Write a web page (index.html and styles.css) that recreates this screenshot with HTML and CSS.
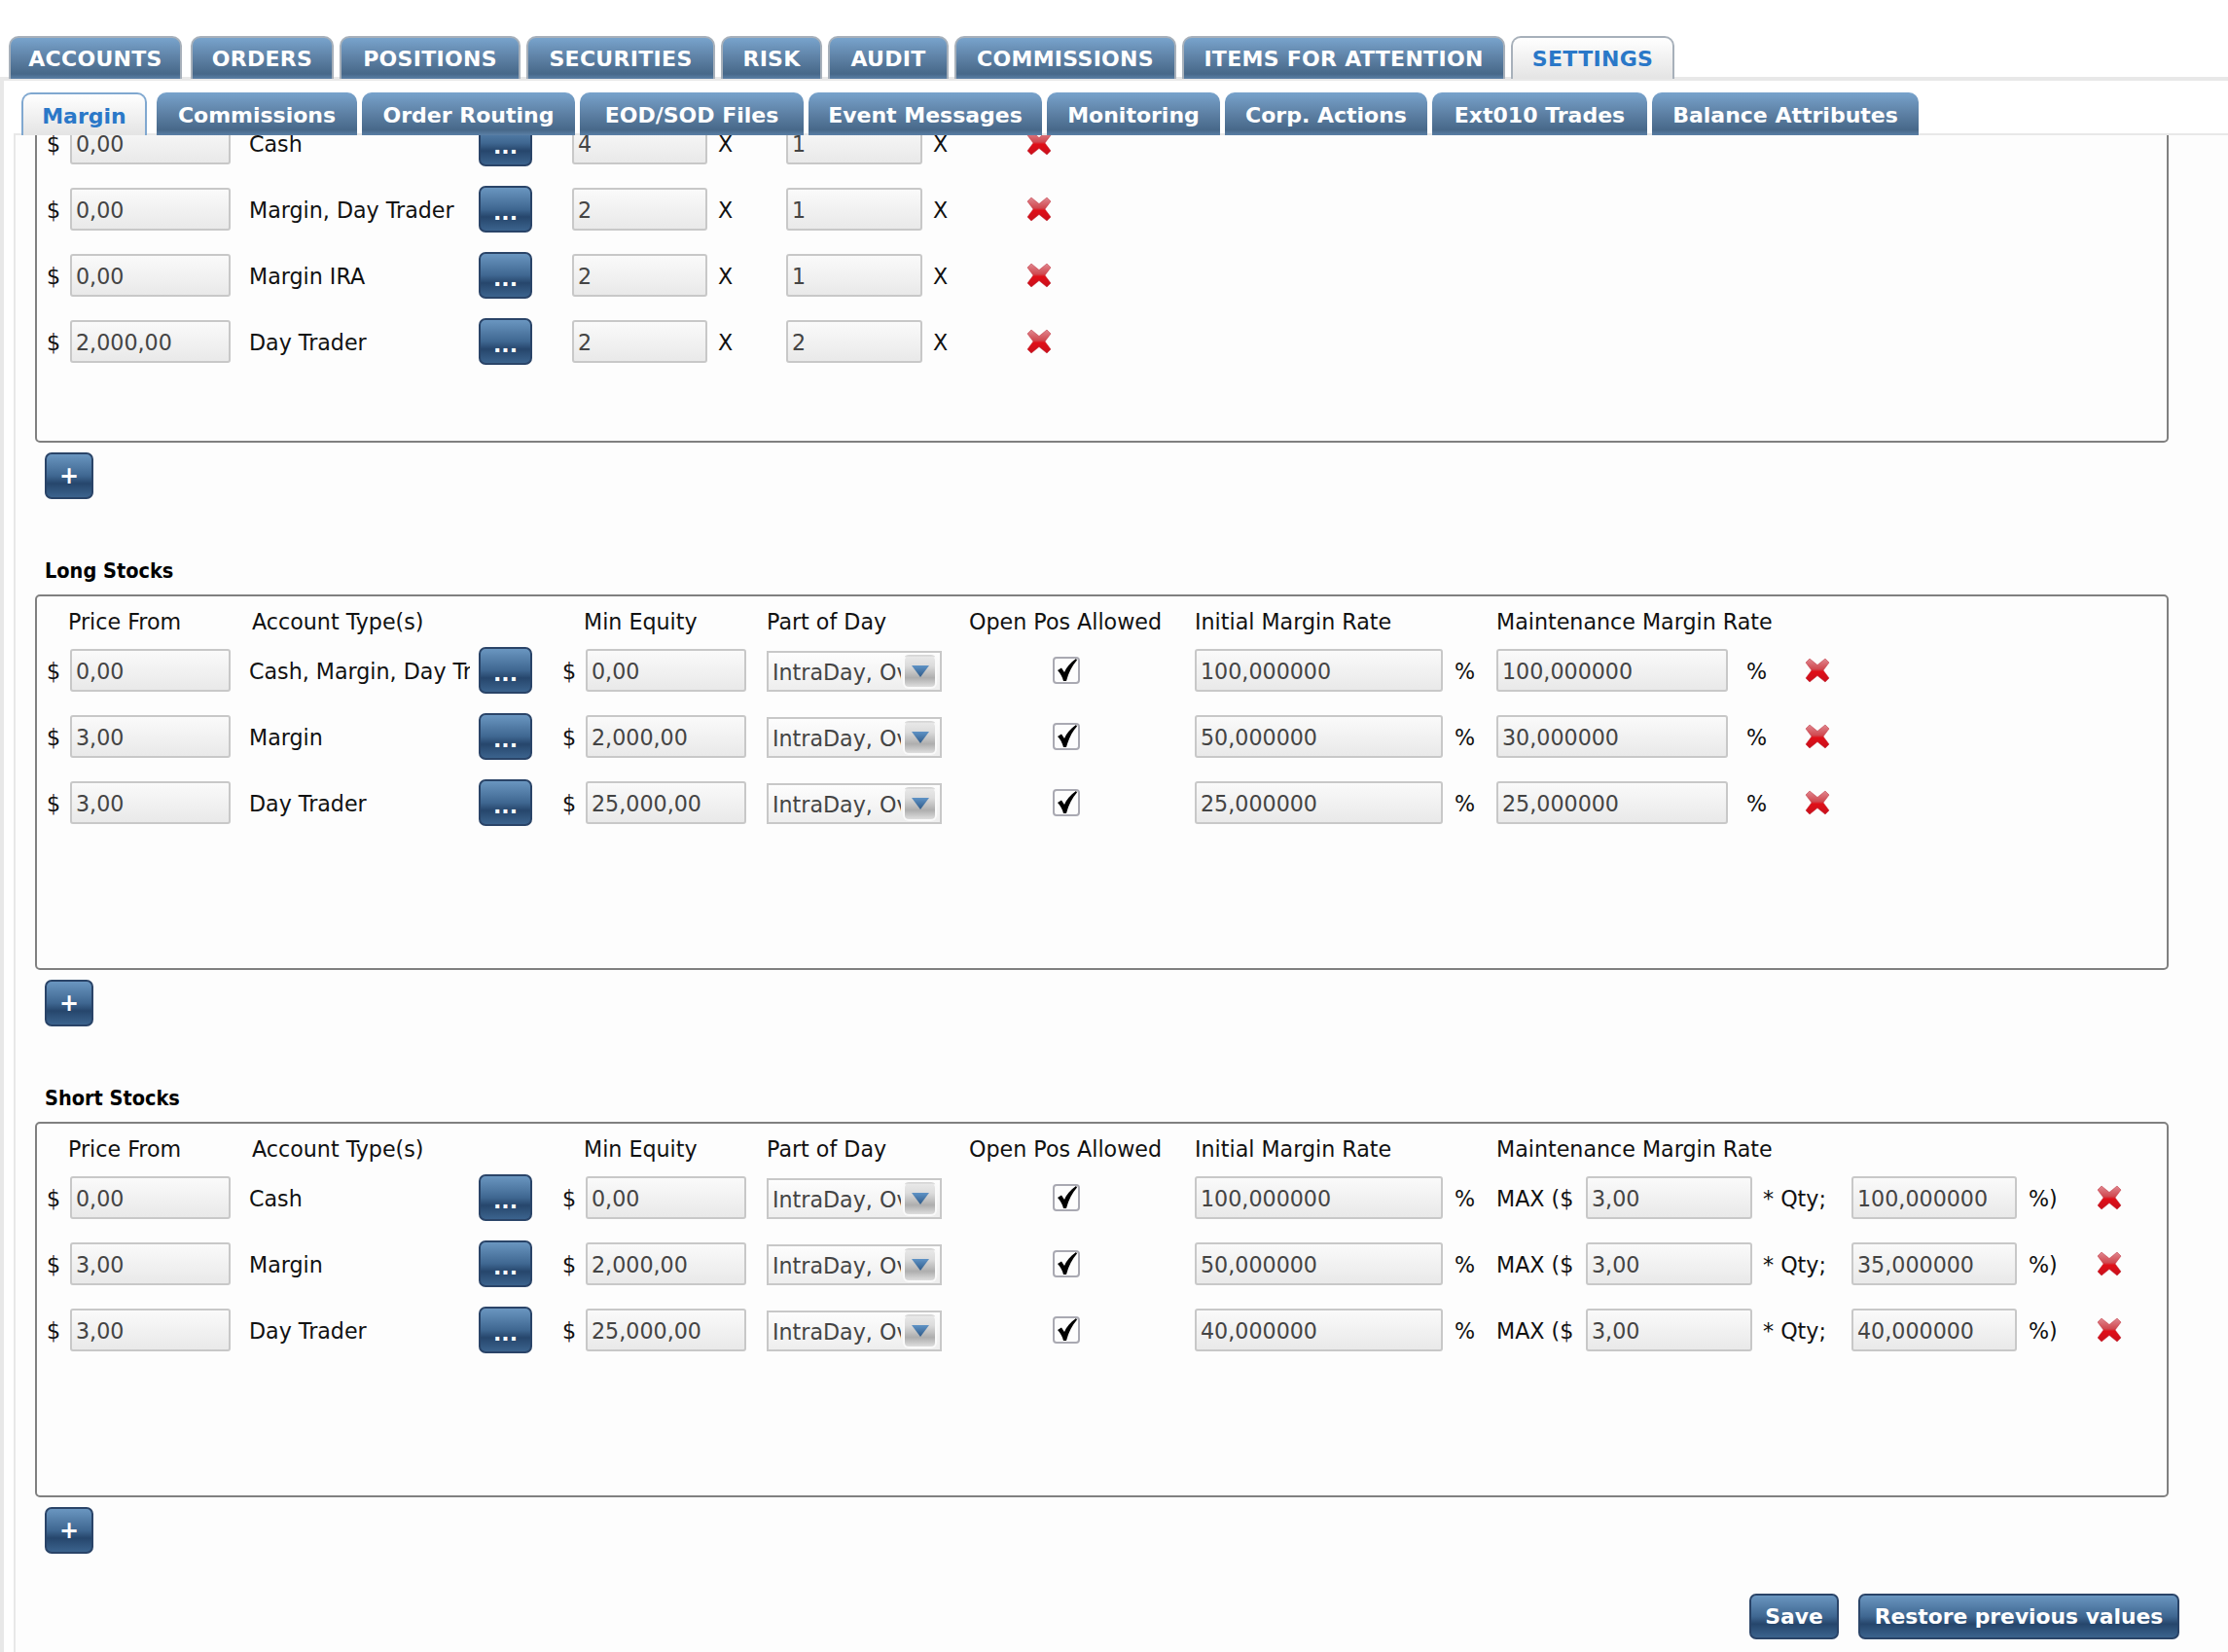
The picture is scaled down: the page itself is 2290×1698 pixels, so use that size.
FILE: index.html
```html
<!DOCTYPE html>
<html lang="en">

<head>
    <meta charset="UTF-8">
    <meta name="viewport" content="width=device-width, initial-scale=1.0">
    <title>Settings - Margin</title>
    <link rel="stylesheet" href="styles.css">
</head>

<body>
    <svg class="sprites" width="0" height="0">
        <defs>
            <linearGradient id="del-fill" x1="0" y1="0" x2="0" y2="1">
                <stop offset="0" stop-color="#e08890" />
                <stop offset="0.45" stop-color="#d0484f" />
                <stop offset="0.55" stop-color="#e00f18" />
                <stop offset="1" stop-color="#c8101c" />
            </linearGradient>
            <linearGradient id="arrow-fill" x1="0" y1="0" x2="0" y2="1">
                <stop offset="0" stop-color="#5f93c6" />
                <stop offset="1" stop-color="#2f5a88" />
            </linearGradient>
            <symbol id="del" viewBox="0 0 26 26">
                <path d="M5 1 L13 7.500 L21 1 L25 5 L19 13 L25 21 L21 25 L13 18.500 L5 25 L1 21 L7 13 L1 5 Z" fill="url(#del-fill)" stroke="#b8202c" stroke-opacity=".45" stroke-linejoin="round" />
            </symbol>
            <symbol id="tick" viewBox="0 0 28 28">
                <path d="M5 14 L9 11.500 L12 16 C14 11 18 6 24 2 L25 3.500 C20 9 16.500 16 14 25 L11 25 C10 21 8 17 5 14 Z" fill="#000" />
            </symbol>
        </defs>
    </svg>

    <nav class="tabs main">
        <a class="tab">ACCOUNTS</a>
        <a class="tab">ORDERS</a>
        <a class="tab">POSITIONS</a>
        <a class="tab">SECURITIES</a>
        <a class="tab">RISK</a>
        <a class="tab">AUDIT</a>
        <a class="tab">COMMISSIONS</a>
        <a class="tab">ITEMS FOR ATTENTION</a>
        <a class="tab active">SETTINGS</a>
    </nav>

    <div class="outer-panel">
        <nav class="tabs sub">
            <a class="tab active">Margin</a>
            <a class="tab">Commissions</a>
            <a class="tab">Order Routing</a>
            <a class="tab">EOD/SOD Files</a>
            <a class="tab">Event Messages</a>
            <a class="tab">Monitoring</a>
            <a class="tab">Corp. Actions</a>
            <a class="tab">Ext010 Trades</a>
            <a class="tab">Balance Attributes</a>
        </nav>

        <div class="sub-panel">
            <!-- first group is scrolled partly out of view -->
            <section class="group scrolled">
                <div class="box">
                    <div class="rows rows-first">
                        <div class="head-spacer"></div>

                        <span>$</span><input class="field" value="0,00"><span class="type">Cash</span><button class="btn">...</button>
                        <span></span><input class="field" value="4"><span class="pad">X</span><input class="field" value="1"><span class="pad">X</span>
                        <svg class="del"><use href="#del" /></svg>

                        <span>$</span><input class="field" value="0,00"><span class="type">Margin, Day Trader</span><button class="btn">...</button>
                        <span></span><input class="field" value="2"><span class="pad">X</span><input class="field" value="1"><span class="pad">X</span>
                        <svg class="del"><use href="#del" /></svg>

                        <span>$</span><input class="field" value="0,00"><span class="type">Margin IRA</span><button class="btn">...</button>
                        <span></span><input class="field" value="2"><span class="pad">X</span><input class="field" value="1"><span class="pad">X</span>
                        <svg class="del"><use href="#del" /></svg>

                        <span>$</span><input class="field" value="2,000,00"><span class="type">Day Trader</span><button class="btn">...</button>
                        <span></span><input class="field" value="2"><span class="pad">X</span><input class="field" value="2"><span class="pad">X</span>
                        <svg class="del"><use href="#del" /></svg>
                    </div>
                </div>
                <button class="btn add">+</button>
            </section>

            <section class="group">
                <h2 class="group-title">Long Stocks</h2>
                <div class="box">
                    <div class="rows rows-long">
                        <span class="head h-price">Price From</span>
                        <span class="head h-type">Account Type(s)</span>
                        <span class="head h-equity">Min Equity</span>
                        <span class="head h-part">Part of Day</span>
                        <span class="head h-open">Open Pos Allowed</span>
                        <span class="head h-init">Initial Margin Rate</span>
                        <span class="head h-maint">Maintenance Margin Rate</span>

                        <span>$</span><input class="field" value="0,00"><span class="type">Cash, Margin, Day Trader</span><button class="btn">...</button>
                        <span class="sym">$</span><input class="field" value="0,00">
                        <div class="select"><span class="select-text">IntraDay, Overnight</span><span class="select-arrow"><svg width="18" height="12" viewBox="0 0 18 12"><path d="M0 0H18L9 12Z" fill="url(#arrow-fill)" /></svg></span></div>
                        <span class="check"><svg width="28" height="28"><use href="#tick" /></svg></span>
                        <input class="field" value="100,000000"><span class="pct">%</span><input class="field" value="100,000000"><span class="pct wide">%</span>
                        <svg class="del"><use href="#del" /></svg>

                        <span>$</span><input class="field" value="3,00"><span class="type">Margin</span><button class="btn">...</button>
                        <span class="sym">$</span><input class="field" value="2,000,00">
                        <div class="select"><span class="select-text">IntraDay, Overnight</span><span class="select-arrow"><svg width="18" height="12" viewBox="0 0 18 12"><path d="M0 0H18L9 12Z" fill="url(#arrow-fill)" /></svg></span></div>
                        <span class="check"><svg width="28" height="28"><use href="#tick" /></svg></span>
                        <input class="field" value="50,000000"><span class="pct">%</span><input class="field" value="30,000000"><span class="pct wide">%</span>
                        <svg class="del"><use href="#del" /></svg>

                        <span>$</span><input class="field" value="3,00"><span class="type">Day Trader</span><button class="btn">...</button>
                        <span class="sym">$</span><input class="field" value="25,000,00">
                        <div class="select"><span class="select-text">IntraDay, Overnight</span><span class="select-arrow"><svg width="18" height="12" viewBox="0 0 18 12"><path d="M0 0H18L9 12Z" fill="url(#arrow-fill)" /></svg></span></div>
                        <span class="check"><svg width="28" height="28"><use href="#tick" /></svg></span>
                        <input class="field" value="25,000000"><span class="pct">%</span><input class="field" value="25,000000"><span class="pct wide">%</span>
                        <svg class="del"><use href="#del" /></svg>
                    </div>
                </div>
                <button class="btn add">+</button>
            </section>

            <section class="group">
                <h2 class="group-title">Short Stocks</h2>
                <div class="box">
                    <div class="rows rows-short">
                        <span class="head h-price">Price From</span>
                        <span class="head h-type">Account Type(s)</span>
                        <span class="head h-equity">Min Equity</span>
                        <span class="head h-part">Part of Day</span>
                        <span class="head h-open">Open Pos Allowed</span>
                        <span class="head h-init">Initial Margin Rate</span>
                        <span class="head h-maint">Maintenance Margin Rate</span>

                        <span>$</span><input class="field" value="0,00"><span class="type">Cash</span><button class="btn">...</button>
                        <span class="sym">$</span><input class="field" value="0,00">
                        <div class="select"><span class="select-text">IntraDay, Overnight</span><span class="select-arrow"><svg width="18" height="12" viewBox="0 0 18 12"><path d="M0 0H18L9 12Z" fill="url(#arrow-fill)" /></svg></span></div>
                        <span class="check"><svg width="28" height="28"><use href="#tick" /></svg></span>
                        <input class="field" value="100,000000"><span class="pct">%</span>
                        <span>MAX ($</span><input class="field" value="3,00"><span class="qty">* Qty;</span><input class="field" value="100,000000"><span class="pct">%)</span>
                        <svg class="del"><use href="#del" /></svg>

                        <span>$</span><input class="field" value="3,00"><span class="type">Margin</span><button class="btn">...</button>
                        <span class="sym">$</span><input class="field" value="2,000,00">
                        <div class="select"><span class="select-text">IntraDay, Overnight</span><span class="select-arrow"><svg width="18" height="12" viewBox="0 0 18 12"><path d="M0 0H18L9 12Z" fill="url(#arrow-fill)" /></svg></span></div>
                        <span class="check"><svg width="28" height="28"><use href="#tick" /></svg></span>
                        <input class="field" value="50,000000"><span class="pct">%</span>
                        <span>MAX ($</span><input class="field" value="3,00"><span class="qty">* Qty;</span><input class="field" value="35,000000"><span class="pct">%)</span>
                        <svg class="del"><use href="#del" /></svg>

                        <span>$</span><input class="field" value="3,00"><span class="type">Day Trader</span><button class="btn">...</button>
                        <span class="sym">$</span><input class="field" value="25,000,00">
                        <div class="select"><span class="select-text">IntraDay, Overnight</span><span class="select-arrow"><svg width="18" height="12" viewBox="0 0 18 12"><path d="M0 0H18L9 12Z" fill="url(#arrow-fill)" /></svg></span></div>
                        <span class="check"><svg width="28" height="28"><use href="#tick" /></svg></span>
                        <input class="field" value="40,000000"><span class="pct">%</span>
                        <span>MAX ($</span><input class="field" value="3,00"><span class="qty">* Qty;</span><input class="field" value="40,000000"><span class="pct">%)</span>
                        <svg class="del"><use href="#del" /></svg>
                    </div>
                </div>
                <button class="btn add">+</button>
            </section>

            <div class="footer">
                <button class="btn action save">Save</button>
                <button class="btn action restore">Restore previous values</button>
            </div>
        </div>
    </div>
</body>

</html>
```

FILE: styles.css
```css
* {
    box-sizing: border-box;
}

html,
body {
    margin: 0;
    height: 100%;
    overflow: hidden;
}

body {
    display: flex;
    flex-direction: column;
    padding-top: 37px;
    font-family: "DejaVu Sans", Verdana, sans-serif;
    font-size: 22.2px;
    color: #111;
    background: #fff;
}

.sprites {
    position: absolute;
}

/* tabs */
.tabs {
    position: relative;
    z-index: 1;
    display: flex;
    gap: 6px;
    height: 44px;
    margin-left: 9px;
}

.tab {
    display: flex;
    align-items: center;
    justify-content: center;
    font-size: 22px;
    font-weight: bold;
    color: #fff;
    white-space: nowrap;
    border: 2px solid #a7b0ba;
    border-bottom: none;
    border-radius: 10px 10px 0 0;
    background: linear-gradient(#78a3cc 0%, #5d80a4 50%, #476889 88%, #5b80a6 100%);
}

.tab.active {
    color: #2a78c8;
    background: linear-gradient(#fff 0%, #f4f4f4 40%, #e4e4e4 100%);
}

.tabs.main .tab {
    letter-spacing: .3px;
}

.tabs.main .tab:nth-child(1) { width: 178px; margin-right: 3px; }
.tabs.main .tab:nth-child(2) { width: 147px; }
.tabs.main .tab:nth-child(3) { width: 186px; }
.tabs.main .tab:nth-child(4) { width: 194px; }
.tabs.main .tab:nth-child(5) { width: 104px; }
.tabs.main .tab:nth-child(6) { width: 124px; }
.tabs.main .tab:nth-child(7) { width: 228px; }
.tabs.main .tab:nth-child(8) { width: 332px; }
.tabs.main .tab:nth-child(9) { width: 168px; }

.tabs.sub {
    gap: 5px;
    margin-left: 8px;
}

.tabs.sub .tab {
    border-width: 0;
    padding-top: 3px;
}

.tabs.sub .tab.active {
    border: 2px solid #80a8d0;
    border-bottom: none;
}

.tabs.sub .tab:nth-child(1) { width: 129px; margin-right: 5px; }
.tabs.sub .tab:nth-child(2) { width: 206px; }
.tabs.sub .tab:nth-child(3) { width: 219px; }
.tabs.sub .tab:nth-child(4) { width: 230px; }
.tabs.sub .tab:nth-child(5) { width: 240px; }
.tabs.sub .tab:nth-child(6) { width: 178px; }
.tabs.sub .tab:nth-child(7) { width: 208px; }
.tabs.sub .tab:nth-child(8) { width: 221px; }
.tabs.sub .tab:nth-child(9) { width: 274px; }

/* panels */
.outer-panel {
    flex: 1;
    display: flex;
    flex-direction: column;
    min-height: 0;
    margin-top: -2px;
    padding: 12px 0 0 10px;
    border-top: 4px solid #e8e8e8;
    border-left: 4px solid #e8e8e8;
}

.sub-panel {
    flex: 1;
    min-height: 0;
    overflow: hidden;
    margin-top: -2px;
    padding: 0 61px 0 20px;
    background: #fdfdfd;
    border-top: 2px solid #e8e8e8;
    border-left: 2px solid #e8e8e8;
}

.group.scrolled {
    margin-top: -70px;
}

.group-title {
    margin: 59px 0 9px 10px;
    font-family: "DejaVu Sans Condensed", "DejaVu Sans", sans-serif;
    font-size: 21.5px;
    line-height: 30px;
    font-weight: bold;
    color: #000;
}

.box {
    height: 386px;
    padding: 8px 0 0 10px;
    border: 2px solid #808080;
    border-radius: 5px;
}

/* rows */
.rows {
    display: grid;
    grid-auto-rows: 68px;
    grid-template-rows: 34px;
    align-items: center;
}

.rows > span {
    padding-top: 2px;
}

.rows-first {
    grid-template-columns: 24px 165px 255px 55px 41px 139px 81px 140px 107px 26px;
}

.rows-long {
    grid-template-columns: 24px 165px 255px 55px 55px 165px 229px 232px 255px 55px 238px 79px 26px;
}

.rows-short {
    grid-template-columns: 24px 165px 255px 55px 55px 165px 229px 232px 255px 55px 92px 171px 102px 170px 82px 26px;
}

.head-spacer {
    grid-column: 1 / -1;
}

.head {
    white-space: nowrap;
}

.h-price {
    grid-column: 1 / 3;
    padding-left: 22px;
}

.h-type {
    grid-column: 3 / 5;
    padding-left: 22px;
}

.h-equity {
    grid-column: 5 / 7;
    padding-left: 53px;
}

.h-part {
    grid-column: 7;
    padding-left: 21px;
}

.h-open {
    grid-column: 8;
}

.h-init {
    grid-column: 9;
}

.h-maint {
    grid-column: 11 / -1;
}

.type {
    display: block;
    overflow: hidden;
    white-space: nowrap;
    margin-left: 19px;
    margin-right: 9px;
}

.sym {
    padding-left: 31px;
}

.pad {
    padding-left: 11px;
}

.pct {
    padding-left: 12px;
    white-space: nowrap;
}

.pct.wide {
    padding-left: 19px;
}

.qty {
    padding-left: 11px;
    white-space: nowrap;
}

/* form controls */
.field {
    width: 100%;
    height: 44px;
    padding: 1px 4px 0;
    font: inherit;
    color: #444;
    border: 2px solid #c8c8c8;
    border-radius: 3px;
    background: linear-gradient(#fafafa, #e9e9e9);
}

.select {
    display: flex;
    align-items: center;
    justify-content: space-between;
    width: 180px;
    height: 42px;
    margin: 2px 0 0 21px;
    padding: 0 3px 0 4px;
    color: #444;
    border: 2px solid #c8c8c8;
    background: linear-gradient(#fdfdfd, #eee);
}

.select-text {
    width: 132px;
    padding-top: 2px;
    overflow: hidden;
    white-space: nowrap;
}

.select-arrow {
    display: flex;
    align-items: center;
    justify-content: center;
    width: 35px;
    height: 35px;
    border: 2px solid #fafafa;
    border-top-color: transparent;
    border-radius: 6px;
    background: linear-gradient(#e8e8e8, #dcdcdc 30%, #aeaeae 70%, #dedede);
}

.rows > .check {
    display: block;
    width: 28px;
    height: 28px;
    margin-left: 86px;
    padding: 0;
    background: #fdfdfd;
    border: 2px solid #a9a9b2;
    border-radius: 4px;
    overflow: hidden;
}

.check svg {
    display: block;
    margin: -2px;
}

.del {
    width: 26px;
    height: 26px;
    filter: blur(.5px);
}

.btn {
    width: 55px;
    height: 48px;
    padding: 8px 0 0;
    font-family: inherit;
    font-size: 22px;
    font-weight: bold;
    line-height: 1;
    color: #fff;
    border: 2px solid #2a4468;
    border-radius: 7px;
    background: linear-gradient(#6a96c0 0%, #3f6791 50%, #26466c 68%, #3b638d 100%);
}

.btn.add {
    display: block;
    width: 50px;
    margin: 10px 0 0 10px;
    padding: 0;
    font-size: 24px;
}

.footer {
    display: flex;
    justify-content: flex-end;
    gap: 20px;
    margin: 41px -11px 0 0;
}

.btn.action {
    height: 47px;
    padding: 0;
    font-size: 21.8px;
}

.btn.save {
    width: 92px;
}

.btn.restore {
    width: 330px;
}
```
